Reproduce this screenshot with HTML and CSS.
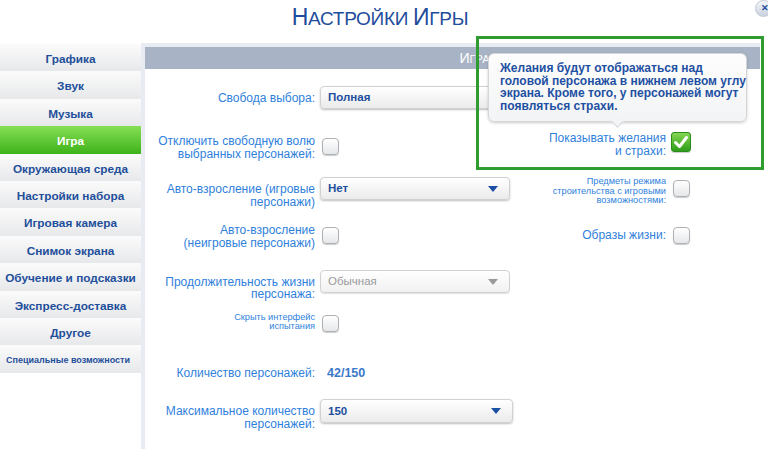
FILE: index.html
```html
<!DOCTYPE html>
<html lang="ru">
<head>
    <meta charset="UTF-8">
    <meta name="viewport" content="width=device-width, initial-scale=1.0">
    <title>Настройки игры</title>

    <link rel="stylesheet" href="styles.css">
</head>
<body>

<div class="screen">

    <header class="topbar">
        <h1 class="title"><span class="word">Настройки</span> <span class="word">игры</span></h1>
        <span class="close">✕</span>
    </header>

    <div class="main">

        <nav class="menu">
            <div class="menu-item">Графика</div>
            <div class="menu-item">Звук</div>
            <div class="menu-item">Музыка</div>
            <div class="menu-item active">Игра</div>
            <div class="menu-item">Окружающая среда</div>
            <div class="menu-item">Настройки набора</div>
            <div class="menu-item">Игровая камера</div>
            <div class="menu-item">Снимок экрана</div>
            <div class="menu-item">Обучение и подсказки</div>
            <div class="menu-item">Экспресс-доставка</div>
            <div class="menu-item">Другое</div>
            <div class="menu-item small">Специальные возможности</div>
        </nav>

        <section class="panel">
            <div class="panel-head"><span class="word">Игра</span></div>

            <div class="form">

                <div class="row r1">
                    <div class="lbl">Свобода выбора:</div>
                    <div class="select"><span>Полная</span><i class="arrow"></i></div>
                </div>

                <div class="row r2">
                    <div class="lbl">Отключить свободную волю<br>выбранных персонажей:</div>
                    <div class="cell"><span class="check"></span></div>
                    <div class="lbl right">Показывать желания<br>и страхи:</div>
                    <div class="cell"><span class="check on">
                        <svg width="20" height="20" viewBox="0 0 20 20"><path d="M4.5 10.5 L8.5 14.5 L15.5 5.5" fill="none" stroke="#fff" stroke-width="3" stroke-linecap="round" stroke-linejoin="round"/></svg>
                    </span></div>
                </div>

                <div class="row r3">
                    <div class="lbl">Авто-взросление (игровые<br>персонажи)</div>
                    <div class="select"><span>Нет</span><i class="arrow"></i></div>
                    <div class="lbl tiny right">Предметы режима<br>строительства с игровыми<br>возможностями:</div>
                    <div class="cell"><span class="check"></span></div>
                </div>

                <div class="row r4">
                    <div class="lbl">Авто-взросление<br>(неигровые персонажи)</div>
                    <div class="cell"><span class="check"></span></div>
                    <div class="lbl right">Образы жизни:</div>
                    <div class="cell"><span class="check"></span></div>
                </div>

                <div class="row r5">
                    <div class="lbl">Продолжительность жизни<br>персонажа:</div>
                    <div class="select disabled"><span>Обычная</span><i class="arrow"></i></div>
                </div>

                <div class="row r6">
                    <div class="lbl tiny">Скрыть интерфейс<br>испытания</div>
                    <div class="cell"><span class="check"></span></div>
                </div>

                <div class="row r7">
                    <div class="lbl">Количество персонажей:</div>
                    <div class="value">42/150</div>
                </div>

                <div class="row r8">
                    <div class="lbl">Максимальное количество<br>персонажей:</div>
                    <div class="select wide"><span>150</span><i class="arrow"></i></div>
                </div>

            </div>
        </section>

    </div>

    <!-- подсказка над чекбоксом желаний -->
    <div class="tooltip">
        Желания будут отображаться над<br>
        головой персонажа в нижнем левом углу<br>
        экрана. Кроме того, у персонажей могут<br>
        появляться страхи.
    </div>

    <div class="highlight"></div>

</div>

</body>
</html>
```

FILE: styles.css
```css
/* экран настроек */
body {
    margin: 0;
    background-color: #ffffff;
    font-family: "Liberation Sans", Arial, sans-serif;
}

.screen {
    position: relative;
    width: 768px;
    height: 449px;
    overflow: hidden;
}

.topbar {
    height: 43px;
}

.title {
    margin: 0;
    padding-top: 4px;
    padding-right: 8px;
    text-align: center;
    font-size: 19px;
    font-weight: normal;
    line-height: 26px;
    color: #1f4d9c;
    text-transform: uppercase;
    letter-spacing: -0.3px;
}

.word {
    display: inline-block;
}

.title .word::first-letter {
    font-size: 23px;
}

.close {
    position: absolute; /* кнопка в углу */
    top: 0;
    left: 755px;
    width: 15px;
    height: 15px;
    border-radius: 50%;
    border: 1px solid #c3c9d3;
    background: linear-gradient(#f4f6f9, #c9d1dd);
    color: #1f4d9c;
    font-size: 9px;
    font-weight: bold;
    line-height: 15px;
    text-indent: 5px;
}

.main {
    display: flex;
    align-items: flex-start;
}

/* левое меню */
.menu {
    width: 141px;
    margin-top: 1px;
}

.menu-item {
    height: 24.4px;
    padding-top: 3px;
    line-height: 24.4px;
    text-align: center;
    font-size: 11.8px;
    font-weight: bold;
    color: #1f4f9b;
    background: linear-gradient(#fbfbfb, #e7e8ea);
    white-space: nowrap;
}

.menu-item.active {
    color: #ffffff;
    background: linear-gradient(#86df55, #3db219);
}

.menu-item.small {
    font-size: 9px;
    text-align: left;
    padding-left: 6px;
}

/* панель */
.panel {
    width: 615px;
    height: 410px;
    border: 4px solid #e8ebf1;
    border-bottom: none;
    border-right: none;
}

.panel-head {
    height: 22px;
    line-height: 22px;
    background-color: #a8b4c5;
    color: #ffffff;
    text-align: center;
    padding-left: 44px;
    font-size: 11px;
    text-transform: uppercase;
}

.panel-head .word::first-letter {
    font-size: 14px;
}

.form {
    padding-top: 17px;
}

.row {
    display: grid;
    grid-template-columns: 170px 195px 156px 30px;
    align-items: start;
}

.lbl {
    text-align: right;
    font-size: 12px;
    line-height: 12.6px;
    color: #2f7fdc;
    white-space: nowrap;
}

.lbl.tiny {
    font-size: 9.2px;
    line-height: 9.6px;
}

.cell {
    padding-left: 7px;
}

.check {
    display: block;
    width: 17px;
    height: 17px;
    box-sizing: border-box;
    border: 1px solid #aeb1b5;
    border-radius: 4px;
    background: linear-gradient(#ffffff, #e6e7e9);
    box-shadow: 0 1px 1px rgba(0, 0, 0, 0.2);
}

.check.on {
    width: 20px;
    height: 20px;
    margin-left: -2px;
    border: 1px solid #2b8c1c;
    border-radius: 3px;
    background: linear-gradient(#84d652, #2e9d1b);
}

.check.on svg {
    display: block;
    margin: -1px;
}

.select {
    position: relative;
    margin-left: 5px;
    width: 190px;
    height: 23px;
    box-sizing: border-box;
    border: 1px solid #cfd1d4;
    border-radius: 4px;
    background: linear-gradient(#ffffff, #ebebec);
    box-shadow: 0 1px 2px rgba(0, 0, 0, 0.25);
    padding-left: 7px;
    font-size: 11.5px;
    font-weight: bold;
    line-height: 21px;
    color: #1e4f9e;
}

.select.wide {
    width: 193px;
    height: 24px;
    line-height: 22px;
}

.select.disabled {
    font-weight: normal;
    color: #9a9a9a;
    background: linear-gradient(#ffffff, #f1f1f2);
    box-shadow: 0 1px 1px rgba(0, 0, 0, 0.12);
}

.arrow {
    position: absolute;
    right: 11px;
    top: 8px;
    width: 0;
    height: 0;
    border-left: 5px solid transparent;
    border-right: 5px solid transparent;
    border-top: 6px solid #1c4fa3;
}

.select.disabled .arrow {
    border-top-color: #9a9a9a;
}

.value {
    padding-left: 12px;
    font-size: 12.5px;
    line-height: 13px;
    font-weight: bold;
    color: #3a78c8;
}

/* отступы строк */
.r1 .lbl { margin-top: 6px; }

.r2 { margin-top: 23px; }
.r2 .lbl { margin-top: 3px; }
.r2 .cell .check { margin-top: 6px; }
.r2 .lbl.right { margin-top: 0; }
.r2 .check.on { margin-top: 0; }

.r3 { margin-top: 17px; }
.r3 .lbl { margin-top: 6px; }
.r3 .lbl.tiny { margin-top: 0; }
.r3 .check { margin-top: 3px; }

.r4 { margin-top: 16px; }
.r4 .check { margin-top: 3px; }
.r4 .lbl.right { margin-top: 5px; }

.r5 { margin-top: 20px; }
.r5 .lbl { margin-top: 6px; }

.r6 { margin-top: 12px; }
.r6 .check { margin-top: 2px; }

.r7 { margin-top: 35px; }

.r8 { margin-top: 19px; }
.r8 .lbl { margin-top: 6px; }

/* подсказка */
.tooltip {
    position: absolute;
    left: 488px;
    top: 53px;
    width: 259px;
    height: 69px;
    box-sizing: border-box;
    padding: 8px 0 0 11px;
    border: 1px solid #d4d6d9;
    border-radius: 6px;
    background: linear-gradient(#fdfdfd, #f3f4f5);
    box-shadow: 0 1px 3px rgba(0, 0, 0, 0.2);
    font-size: 12px;
    font-weight: bold;
    line-height: 12.7px;
    color: #1e50a2;
}

.tooltip::after {
    content: "";
    position: absolute;
    left: 124px;
    bottom: -5px;
    width: 8px;
    height: 8px;
    background-color: #f3f4f5;
    border-right: 1px solid #d4d6d9;
    border-bottom: 1px solid #d4d6d9;
    transform: rotate(45deg);
}

.highlight {
    position: absolute;
    left: 476px;
    top: 36px;
    width: 288px;
    height: 134px;
    box-sizing: border-box;
    border: 3px solid #2f9c2f;
}
```
